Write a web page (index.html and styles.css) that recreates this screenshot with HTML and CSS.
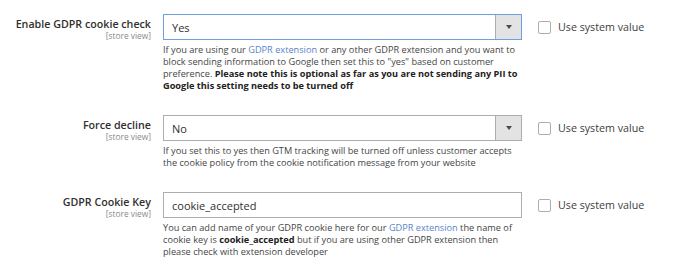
FILE: index.html
```html
<!DOCTYPE html>
<html lang="en">
<head>
    <meta charset="UTF-8">
    <title>GTM Settings - GDPR</title>
    <link rel="stylesheet" href="styles.css">
</head>
<body>
    <div class="config">
        <div class="row">
            <div class="label">
                <span class="title">Enable GDPR cookie check</span>
                <span class="scope">[store view]</span>
            </div>
            <div class="value">
                <div class="select focused">
                    <span class="select-text">Yes</span>
                    <span class="select-btn"><span class="arrow"></span></span>
                </div>
                <p class="note">If you are using our <a href="#">GDPR extension</a> or any other GDPR extension and you want to block sending information to Google then set this to "yes" based on customer preference. <strong>Please note this is optional as far as you are not sending any PII to Google this setting needs to be turned off</strong></p>
            </div>
            <label class="inherit"><span class="box"></span>Use system value</label>
        </div>

        <div class="row">
            <div class="label">
                <span class="title">Force decline</span>
                <span class="scope">[store view]</span>
            </div>
            <div class="value">
                <div class="select">
                    <span class="select-text">No</span>
                    <span class="select-btn"><span class="arrow"></span></span>
                </div>
                <p class="note">If you set this to yes then GTM tracking will be turned off unless customer accepts the cookie policy from the cookie notification message from your website</p>
            </div>
            <label class="inherit"><span class="box"></span>Use system value</label>
        </div>

        <div class="row">
            <div class="label">
                <span class="title">GDPR Cookie Key</span>
                <span class="scope">[store view]</span>
            </div>
            <div class="value">
                <div class="input">cookie_accepted</div>
                <p class="note">You can add name of your GDPR cookie here for our <a href="#">GDPR extension</a> the name of cookie key is <strong>cookie_accepted</strong> but if you are using other GDPR extension then please check with extension developer</p>
            </div>
            <label class="inherit"><span class="box"></span>Use system value</label>
        </div>
    </div>
</body>
</html>
```

FILE: styles.css
```css
body {
    margin: 0;
    background: #fff;
    font-family: 'Open Sans', 'Noto Sans', sans-serif;
    color: #303030;
}
.config {
    padding-top: 14px;
}
.row {
    display: grid;
    grid-template-columns: 151px 359px auto;
    column-gap: 12px;
    align-items: start;
    margin-bottom: 23px;
}
.label {
    display: flex;
    flex-direction: column;
    align-items: flex-end;
    padding-top: 3px;
}
.title {
    font-size: 10.7px;
    font-weight: 600;
    line-height: 14px;
}
.scope {
    font-size: 8.4px;
    color: #8a8a8a;
    line-height: 10px;
}
.select, .input {
    box-sizing: border-box;
    height: 26px;
    border: 1px solid #adadad;
    display: flex;
    align-items: center;
    font-size: 11px;
    background: #fff;
}
.select.focused {
    border-color: #6f9fe0;
}
.select-text {
    flex: 1;
    padding-left: 8px;
}
.input {
    padding-left: 8px;
}
.select-btn {
    width: 25px;
    align-self: stretch;
    background: #e3e3e3;
    border-left: 1px solid #adadad;
    display: flex;
    align-items: center;
    justify-content: center;
}
.arrow {
    width: 0;
    height: 0;
    border-left: 3px solid transparent;
    border-right: 3px solid transparent;
    border-top: 4px solid #514943;
}
.note {
    margin: 4px 0 0;
    font-size: 9.2px;
    line-height: 12px;
    color: #454545;
}
.note a {
    color: #5a84c8;
    text-decoration: none;
}
.note strong {
    color: #222;
}
.inherit {
    display: flex;
    align-items: center;
    gap: 7px;
    height: 26px;
    margin-left: 4px;
    font-size: 10.7px;
    color: #404040;
}
.box {
    box-sizing: border-box;
    width: 13px;
    height: 13px;
    border: 1px solid #adadad;
    border-radius: 2px;
    background: #fff;
}
```
